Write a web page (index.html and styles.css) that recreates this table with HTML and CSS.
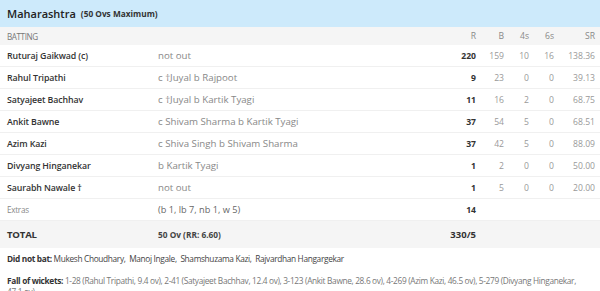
FILE: index.html
```html
<!DOCTYPE html>
<html>
<head>
<meta charset="utf-8">
<link rel="stylesheet" href="styles.css">
</head>
<body>
<div class="card">
  <div class="head"><span class="team">Maharashtra</span><span class="ovs">(50 Ovs Maximum)</span></div>
  <div class="row sub">
    <div class="name">BATTING</div><div class="how"></div>
    <div class="r">R</div><div class="n">B</div><div class="n">4s</div><div class="n">6s</div><div class="sr">SR</div>
  </div>
  <div class="row">
    <div class="name">Ruturaj Gaikwad (c)</div><div class="how">not out</div>
    <div class="r">220</div><div class="n">159</div><div class="n">10</div><div class="n">16</div><div class="sr">138.36</div>
  </div>
  <div class="row">
    <div class="name">Rahul Tripathi</div><div class="how">c †Juyal b Rajpoot</div>
    <div class="r">9</div><div class="n">23</div><div class="n">0</div><div class="n">0</div><div class="sr">39.13</div>
  </div>
  <div class="row">
    <div class="name">Satyajeet Bachhav</div><div class="how">c †Juyal b Kartik Tyagi</div>
    <div class="r">11</div><div class="n">16</div><div class="n">2</div><div class="n">0</div><div class="sr">68.75</div>
  </div>
  <div class="row">
    <div class="name">Ankit Bawne</div><div class="how">c Shivam Sharma b Kartik Tyagi</div>
    <div class="r">37</div><div class="n">54</div><div class="n">5</div><div class="n">0</div><div class="sr">68.51</div>
  </div>
  <div class="row">
    <div class="name">Azim Kazi</div><div class="how">c Shiva Singh b Shivam Sharma</div>
    <div class="r">37</div><div class="n">42</div><div class="n">5</div><div class="n">0</div><div class="sr">88.09</div>
  </div>
  <div class="row">
    <div class="name">Divyang Hinganekar</div><div class="how">b Kartik Tyagi</div>
    <div class="r">1</div><div class="n">2</div><div class="n">0</div><div class="n">0</div><div class="sr">50.00</div>
  </div>
  <div class="row">
    <div class="name">Saurabh Nawale †</div><div class="how">not out</div>
    <div class="r">1</div><div class="n">5</div><div class="n">0</div><div class="n">0</div><div class="sr">20.00</div>
  </div>
  <div class="row extras">
    <div class="name">Extras</div><div class="how">(b 1, lb 7, nb 1, w 5)</div>
    <div class="r">14</div><div class="n"></div><div class="n"></div><div class="n"></div><div class="sr"></div>
  </div>
  <div class="row total">
    <div class="name">TOTAL</div><div class="how">50 Ov (RR: 6.60)</div>
    <div class="r">330/5</div><div class="n"></div><div class="n"></div><div class="n"></div><div class="sr"></div>
  </div>
  <div class="note"><b>Did not bat:</b> Mukesh Choudhary,&nbsp; Manoj Ingale,&nbsp; Shamshuzama Kazi,&nbsp; Rajvardhan Hangargekar</div>
  <div class="note fow"><b>Fall of wickets:</b> <span>1-28 (Rahul Tripathi, 9.4 ov), 2-41 (Satyajeet Bachhav, 12.4 ov), 3-123 (Ankit Bawne, 28.6 ov), 4-269 (Azim Kazi, 46.5 ov), 5-279 (Divyang Hinganekar, 47.1 ov)</span></div>
</div>
</body>
</html>
```
FILE: styles.css
```css
* { box-sizing: border-box; }
body {
  margin: 0;
  background: #fff;
  font-family: "Open Sans", "Noto Sans", sans-serif;
  color: #3a3a3a;
  overflow: hidden;
}
.card { width: 600px; }
.head {
  background: #cdeafb;
  height: 27px;
  display: flex;
  align-items: center;
  padding-left: 7px;
  gap: 5px;
}
.team { font-size: 11px; font-weight: 600; color: #222; }
.ovs { font-size: 8.3px; font-weight: 700; color: #333; }
.row {
  display: grid;
  grid-template-columns: 151px 287px 31px 28px 25px 25px 41px;
  height: 22px;
  align-items: center;
  border-bottom: 1px solid #f0f0f0;
  padding-left: 7px;
  font-size: 8.6px;
}
.row.sub {
  height: 18px;
  background: #f5f5f5;
  color: #777;
  border-bottom: none;
}
.name { color: #333; font-weight: 600; white-space: nowrap; font-size: 8.8px; letter-spacing: -0.1px; }
.sub .name { font-weight: 400; color: #777; font-size: 8.1px; letter-spacing: -0.4px; }
.how { color: #888; font-size: 9.7px; white-space: nowrap; }
.r { text-align: right; font-weight: 700; color: #333; }
.n, .sr { text-align: right; color: #999; }
.sub .r { font-weight: 400; color: #888; }
.sub .n, .sub .sr { color: #888; }
.extras .name { font-weight: 400; color: #888; font-size: 8.1px; letter-spacing: -0.25px; }
.extras .how { color: #666; font-size: 9.2px; }
.total {
  background: #f5f5f5;
  height: 27px;
  border-bottom: none;
}
.total .name { font-size: 9.6px; font-weight: 700; color: #333; letter-spacing: -0.2px; }
.total .how { font-size: 8.3px; font-weight: 700; color: #444; }
.total .r { font-size: 9.5px; }
.note {
  padding: 0 7px;
  font-size: 8.3px;
  letter-spacing: -0.33px;
  line-height: 11px;
  color: #444;
  margin-top: 5px;
}
.note b { font-weight: 700; color: #333; }
.fow { margin-top: 11px; padding-right: 9px; }
.fow span { color: #777; }
```
